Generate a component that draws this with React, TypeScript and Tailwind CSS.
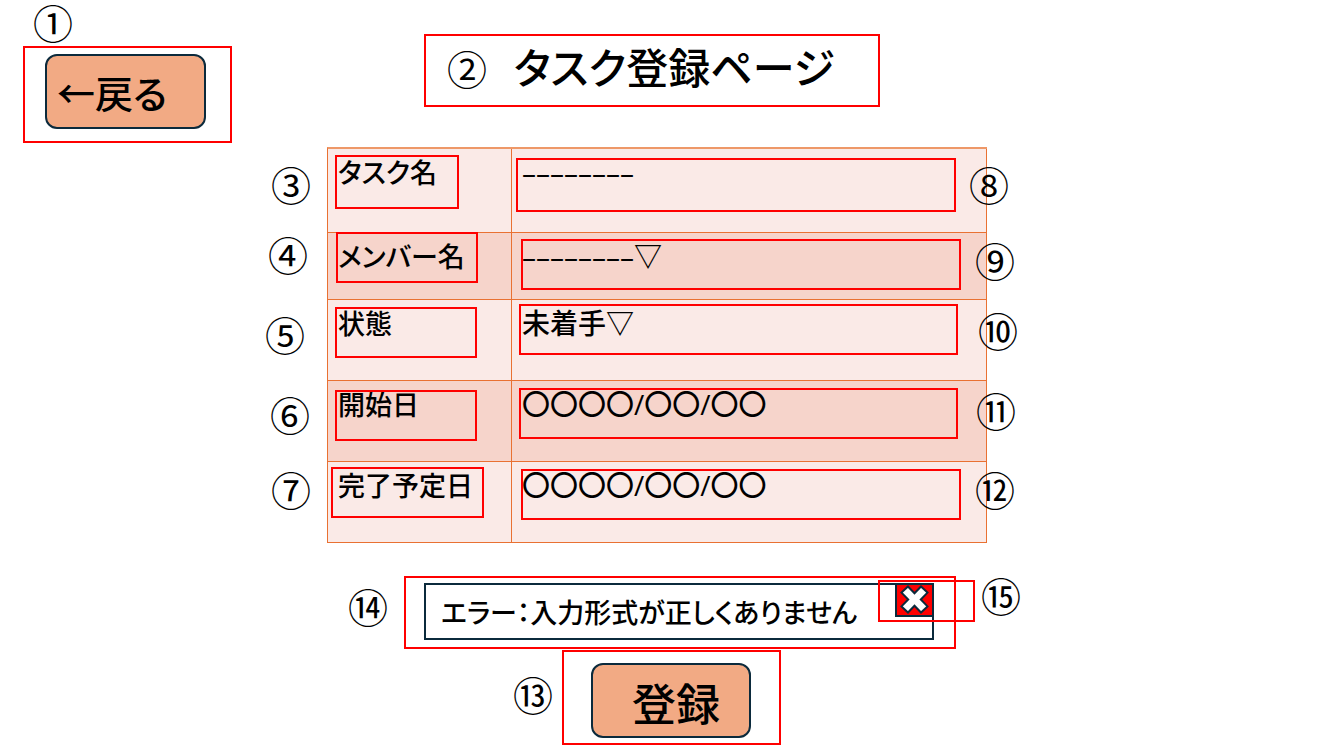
import React from "react";

type Field = {
  id: string;
  label: string;
  value: string;
  kind: "text" | "select";
  row: string;
  labelMark: string;
  labelFrame: string;
  labelBadge: string;
  valueMark: string;
  valueFrame: string;
  valueBadge: string;
};

const fields: Field[] = [
  {
    id: "task", label: "タスク名", value: "––––––––", kind: "text",
    row: "h-[84px] bg-[#faeae7]",
    labelMark: "③", labelFrame: "left-[7px] top-[6px] w-[124px] h-[54px]", labelBadge: "-left-[57px] top-[17px]",
    valueMark: "⑧", valueFrame: "left-[4px] right-[30px] top-[9px] h-[54px]", valueBadge: "-right-[23px] top-[17px]",
  },
  {
    id: "member", label: "メンバー名", value: "––––––––▽", kind: "select",
    row: "h-[67px] bg-[#f6d4cb]",
    labelMark: "④", labelFrame: "left-[8px] -top-px w-[142px] h-[51px]", labelBadge: "-left-[60px] top-[3px]",
    valueMark: "⑨", valueFrame: "left-[9px] right-[25px] top-[6px] h-[51px]", valueBadge: "-right-[29px] top-[9px]",
  },
  {
    id: "status", label: "状態", value: "未着手▽", kind: "select",
    row: "h-[81px] bg-[#faeae7]",
    labelMark: "⑤", labelFrame: "left-[7px] top-[7px] w-[142px] h-[51px]", labelBadge: "-left-[63px] top-[16px]",
    valueMark: "⑩", valueFrame: "left-[7px] right-[28px] top-[4px] h-[51px]", valueBadge: "-right-[32px] top-[12px]",
  },
  {
    id: "start", label: "開始日", value: "〇〇〇〇/〇〇/〇〇", kind: "text",
    row: "h-[81px] bg-[#f6d4cb]",
    labelMark: "⑥", labelFrame: "left-[7px] top-[9px] w-[142px] h-[51px]", labelBadge: "-left-[58px] top-[15px]",
    valueMark: "⑪", valueFrame: "left-[7px] right-[28px] top-[7px] h-[51px]", valueBadge: "-right-[30px] top-[11px]",
  },
  {
    id: "due", label: "完了予定日", value: "〇〇〇〇/〇〇/〇〇", kind: "text",
    row: "h-[81px] bg-[#faeae7]",
    labelMark: "⑦", labelFrame: "left-[3px] top-[5px] w-[153px] h-[51px]", labelBadge: "-left-[57px] top-[9px]",
    valueMark: "⑫", valueFrame: "left-[9px] right-[25px] top-[7px] h-[51px]", valueBadge: "-right-[29px] top-[9px]",
  },
];

function Badge({ mark, className }: { mark: string; className: string }) {
  return (
    <span className={`absolute z-10 flex size-10 items-start justify-center text-[40px] leading-9 font-normal ${className}`}>
      {mark}
    </span>
  );
}

function Frame({ className }: { className: string }) {
  return <span className={`pointer-events-none absolute border-2 border-[#ff0000] ${className}`} />;
}

function Control({ field }: { field: Field }) {
  const style =
    "block h-9 w-full appearance-none bg-transparent p-0 font-['Open_Sans','Noto_Sans_CJK_JP',sans-serif] text-[28px] leading-9 font-medium outline-none";
  if (field.kind === "select") {
    return (
      <select id={field.id} className={style}>
        <option>{field.value}</option>
      </select>
    );
  }
  return <input id={field.id} type="text" defaultValue={field.value} className={style} />;
}

export default function App() {
  return (
    <div className="min-h-screen overflow-x-hidden bg-white pt-[34px] font-['Noto_Sans_CJK_JP',sans-serif] font-medium text-black [font-feature-settings:'palt']">
      <header className="grid grid-cols-[1fr_456px_1fr] items-start pr-[26px]">
        <div className="relative mt-3 ml-[23px] w-[209px] border-2 border-[#ff0000] pt-[6px] pb-3 pl-5">
          <Badge mark="①" className="left-2 -top-[44px]" />
          <button type="button" className="flex h-[75px] w-[161px] items-center rounded-xl border-2 border-[#0b2a3c] bg-[#f2aa84] pl-[10px] text-[38px] leading-10">
            ←戻る
          </button>
        </div>
        <div className="relative h-[73px] border-2 border-[#ff0000] pl-[88px]">
          <Badge mark="②" className="left-[21px] top-[14px]" />
          <h1 className="text-[42px] leading-[60px] whitespace-nowrap">タスク登録ページ</h1>
        </div>
      </header>

      <main className="mx-auto w-full max-w-[676px] pt-1 pr-4">
        <form>
          <table className="w-full table-fixed border-separate border-spacing-0 border-t-2 border-l border-t-[#ee9868] border-l-[#e97132]">
            <colgroup>
              <col className="w-[184px]" />
              <col />
            </colgroup>
            <tbody>
              {fields.map((f) => (
                <tr key={f.id} className={f.row}>
                  <th className="relative border-r border-b border-[#e97132] pt-[5px] pb-1 pr-0 pl-[10px] text-left align-top font-medium">
                    <label htmlFor={f.id} className="block text-[27px] leading-9 whitespace-nowrap">{f.label}</label>
                    <Frame className={f.labelFrame} />
                    <Badge mark={f.labelMark} className={f.labelBadge} />
                  </th>
                  <td className="relative border-r border-b border-[#e97132] pt-[5px] pb-1 pr-10 pl-[10px] align-top">
                    <Control field={f} />
                    <Frame className={f.valueFrame} />
                    <Badge mark={f.valueMark} className={f.valueBadge} />
                  </td>
                </tr>
              ))}
            </tbody>
          </table>

          <div className="relative mt-[33px] ml-[77px] w-[552px] border-2 border-[#ff0000] pt-[5px] pr-5 pb-[7px] pl-[18px]">
            <Badge mark="⑭" className="-left-[58px] top-[10px]" />
            <div role="alert" className="relative flex h-[57px] items-center border-2 border-[#0b2a3c] pl-[15px]">
              <p className="text-[27px] leading-9 whitespace-nowrap">エラー：入力形式が正しくありません</p>
              <button type="button" aria-label="閉じる" className="absolute -top-[2px] -right-[2px] flex h-[34px] w-[39px] items-center justify-center border-2 border-[#0b2a3c] bg-[#ff0000]">
                <svg width="30" height="30" viewBox="0 0 30 30" className="shrink-0">
                  <path
                    d="M8 1.5 L14.5 8.2 L21 1.5 L27.5 7.6 L20.8 14.5 L27.5 21.4 L21 27.5 L14.5 20.8 L8 27.5 L1.5 21.4 L8.2 14.5 L1.5 7.6 Z"
                    fill="#fff" stroke="#0b2a3c" strokeWidth="2" strokeLinejoin="miter"
                  />
                </svg>
              </button>
              <Frame className="-right-[43px] -top-[5px] h-[42px] w-[97px]" />
              <Badge mark="⑮" className="-right-[89px] -top-[8px]" />
            </div>
          </div>

          <div className="relative mt-px ml-[235px] w-[219px] border-2 border-[#ff0000] pt-[11px] pb-[5px] pl-[27px]">
            <Badge mark="⑬" className="-left-[51px] top-6" />
            <button type="button" className="flex h-[75px] w-[160px] items-center justify-center rounded-xl border-2 border-[#0b2a3c] bg-[#f2aa84] pt-[2px] pl-[10px] text-[44px]">
              登録
            </button>
          </div>
        </form>
      </main>
    </div>
  );
}
